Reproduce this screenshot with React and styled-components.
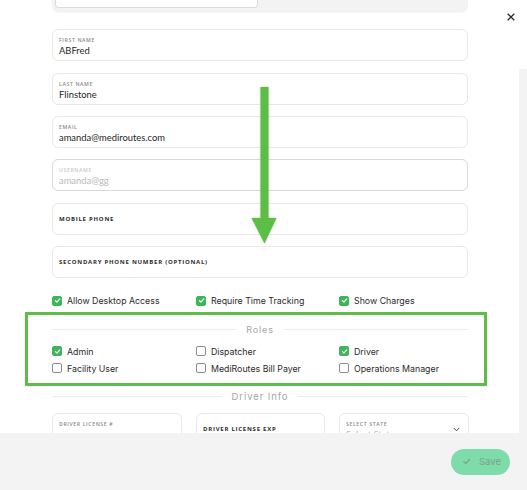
import React from 'react';
import styled, { createGlobalStyle } from 'styled-components';

const GlobalStyle = createGlobalStyle`
  html, body {
    margin: 0;
    padding: 0;
    background: #ffffff;
  }
  * {
    box-sizing: border-box;
  }
`;

const Page = styled.div`
  width: 527px;
  height: 490px;
  display: flex;
  flex-direction: column;
  background: #fff;
  font-family: "Open Sans", "Noto Sans", sans-serif;
  overflow: hidden;
`;

const ScrollArea = styled.div`
  position: relative;
  height: 433px;
  flex-shrink: 0;
  display: flex;
  padding-left: 52px;
  overflow: hidden;
`;

const FormColumn = styled.div`
  width: 416px;
  flex-shrink: 0;
  display: flex;
  flex-direction: column;
`;

const RightColumn = styled.div`
  flex: 1;
  display: flex;
  justify-content: flex-end;
`;

const CloseButton = styled.div`
  width: 8px;
  height: 8px;
  margin-top: 13px;
  margin-right: 4px;
  display: flex;
  color: #2a2a2a;
`;

const ScrollTrack = styled.div`
  width: 8px;
  padding-top: 69px;
  display: flex;
  flex-direction: column;
`;

const ScrollThumb = styled.div`
  flex: 1;
  background: #f3f3f3;
`;

const TopPanel = styled.div`
  height: 12px;
  flex-shrink: 0;
  background: #f3f3f3;
  border-radius: 0 0 6px 6px;
  padding-left: 3px;
  box-shadow: 0 1px 1px rgba(0, 0, 0, 0.03);
`;

const TopInput = styled.div`
  width: 203px;
  height: 8px;
  background: #fff;
  border: 1px solid #dcdcdc;
  border-top: none;
  border-radius: 0 0 4px 4px;
`;

const FieldList = styled.div`
  margin-top: 17.3px;
  display: flex;
  flex-direction: column;
  gap: 11.33px;
`;

const Field = styled.div`
  height: 32px;
  flex-shrink: 0;
  border: 1px solid ${p => (p.$disabled ? '#d9d9d9' : '#e8e8e8')};
  border-radius: 6px;
  padding: 0 6px;
  display: flex;
  flex-direction: column;
  justify-content: ${p => (p.$center ? 'center' : 'flex-start')};
  padding-top: ${p => (p.$center ? '0' : '7px')};
  background: #fff;
`;

const SmallLabel = styled.div`
  font-size: 5.2px;
  font-weight: 600;
  letter-spacing: 0.6px;
  text-transform: uppercase;
  color: ${p => (p.$disabled ? '#c8c8c8' : '#8a8a8a')};
  line-height: 7px;
`;

const Value = styled.div`
  font-family: Lato, "Open Sans", sans-serif;
  font-size: 9.4px;
  color: ${p => (p.$disabled ? '#b9b9b9' : '#1f1f1f')};
  line-height: 12px;
  margin-top: 1px;
`;

const BoldLabel = styled.div`
  font-size: 6px;
  font-weight: 700;
  letter-spacing: 0.75px;
  text-transform: uppercase;
  color: #2c2c2c;
  line-height: 8px;
`;

const OptionsRow = styled.div`
  margin-top: 17px;
  display: grid;
  grid-template-columns: 144px 143px 1fr;
`;

const CheckItem = styled.label`
  display: flex;
  align-items: center;
  gap: 5px;
  height: 12px;
  font-family: Inter, "Liberation Sans", sans-serif;
  font-size: 8.8px;
  color: #2b2b2b;
`;

const Box = styled.span`
  width: 10px;
  height: 10px;
  border-radius: 2px;
  display: flex;
  align-items: center;
  justify-content: center;
  background: ${p => (p.$checked ? '#3fb45a' : '#fff')};
  border: 1px solid ${p => (p.$checked ? '#3fb45a' : '#8c8c8c')};
  flex-shrink: 0;
`;

const RolesBox = styled.div`
  margin: 5.3px -19px 0 -27px;
  border: 3px solid #5cbd48;
  padding: 8px 16px 9px 24px;
`;

const Divider = styled.div`
  display: flex;
  align-items: center;
  gap: 10px;
  height: 12px;
  flex-shrink: 0;
  margin-top: ${p => p.$mt || '0'};
  font-family: Inter, "Liberation Sans", sans-serif;
  font-size: ${p => p.$size || '9px'};
  letter-spacing: 0.9px;
  color: #a6a6a6;

  &::before,
  &::after {
    content: '';
    flex: 1;
    height: 1px;
    background: #ececec;
  }
`;

const RolesGrid = styled.div`
  margin-top: 10px;
  display: grid;
  grid-template-columns: 144px 143px 1fr;
  row-gap: 5px;
`;

const DriverGrid = styled.div`
  margin-top: 11px;
  display: grid;
  grid-template-columns: 130px 129px 130px;
  column-gap: 14px;
  justify-content: space-between;
`;

const DriverField = styled(Field)`
  position: relative;
`;

const Chevron = styled.div`
  position: absolute;
  right: 8px;
  top: 13px;
  display: flex;
  color: #444;
`;

const ArrowOverlay = styled.svg`
  position: absolute;
  left: 251px;
  top: 87px;
  filter: drop-shadow(0 0 1px rgba(60, 150, 40, 0.4));
`;

const Footer = styled.div`
  height: 57px;
  flex-shrink: 0;
  background: #f3f3f3;
  display: flex;
  align-items: center;
  justify-content: flex-end;
  padding-right: 17px;
`;

const SaveButton = styled.button`
  width: 59px;
  height: 26px;
  border: none;
  border-radius: 13px;
  background: #7edcab;
  color: #7d9f8b;
  font-family: Inter, "Liberation Sans", sans-serif;
  font-size: 9.5px;
  display: flex;
  align-items: center;
  justify-content: center;
  gap: 8px;
  padding: 0 0 0 2px;
`;

const Check = ({ color = '#fff', size = 7 }) => (
  <svg width={size} height={size} viewBox="0 0 10 10" fill="none">
    <path d="M2 5.2 L4.2 7.3 L8.2 2.8" stroke={color} strokeWidth="1.6" strokeLinecap="round" strokeLinejoin="round" />
  </svg>
);

const CheckBox = ({ checked, children }) => (
  <CheckItem>
    <Box $checked={checked}>{checked && <Check />}</Box>
    {children}
  </CheckItem>
);

const fields = [
  { label: 'First Name', value: 'ABFred' },
  { label: 'Last Name', value: 'Flinstone' },
  { label: 'Email', value: 'amanda@mediroutes.com' },
  { label: 'Username', value: 'amanda@gg', disabled: true },
];

const roles = [
  { name: 'Admin', checked: true },
  { name: 'Dispatcher', checked: false },
  { name: 'Driver', checked: true },
  { name: 'Facility User', checked: false },
  { name: 'MediRoutes Bill Payer', checked: false },
  { name: 'Operations Manager', checked: false },
];

export default function App() {
  return (
    <Page>
      <GlobalStyle />
      <ScrollArea>
        <FormColumn>
          <TopPanel>
            <TopInput />
          </TopPanel>

          <FieldList>
            {fields.map(f => (
              <Field key={f.label} $disabled={f.disabled}>
                <SmallLabel $disabled={f.disabled}>{f.label}</SmallLabel>
                <Value $disabled={f.disabled}>{f.value}</Value>
              </Field>
            ))}
            <Field $center>
              <BoldLabel>Mobile Phone</BoldLabel>
            </Field>
            <Field $center>
              <BoldLabel>Secondary Phone Number (Optional)</BoldLabel>
            </Field>
          </FieldList>

          <OptionsRow>
            <CheckBox checked>Allow Desktop Access</CheckBox>
            <CheckBox checked>Require Time Tracking</CheckBox>
            <CheckBox checked>Show Charges</CheckBox>
          </OptionsRow>

          <RolesBox>
            <Divider>Roles</Divider>
            <RolesGrid>
              {roles.map(r => (
                <CheckBox key={r.name} checked={r.checked}>{r.name}</CheckBox>
              ))}
            </RolesGrid>
          </RolesBox>

          <Divider $mt="4px" $size="9.5px">Driver Info</Divider>

          <DriverGrid>
            <DriverField>
              <SmallLabel>Driver License #</SmallLabel>
            </DriverField>
            <DriverField $center>
              <BoldLabel>Driver License Exp</BoldLabel>
            </DriverField>
            <DriverField>
              <SmallLabel>Select State</SmallLabel>
              <Value $disabled>Select State</Value>
              <Chevron>
                <svg width="7" height="5" viewBox="0 0 7 5" fill="none">
                  <path d="M0.8 1 L3.5 3.8 L6.2 1" stroke="currentColor" strokeWidth="1" />
                </svg>
              </Chevron>
            </DriverField>
          </DriverGrid>
        </FormColumn>

        <RightColumn>
          <CloseButton>
            <svg width="8" height="8" viewBox="0 0 8 8">
              <path d="M0.7 0.7 L7.3 7.3 M7.3 0.7 L0.7 7.3" stroke="currentColor" strokeWidth="1.3" />
            </svg>
          </CloseButton>
          <ScrollTrack>
            <ScrollThumb />
          </ScrollTrack>
        </RightColumn>

        <ArrowOverlay width="26" height="157" viewBox="0 0 26 157">
          <rect x="9.5" y="0" width="8" height="133" fill="#5cbd47" />
          <polygon points="0.5,131 25.5,131 13.5,156.5" fill="#5cbd47" />
        </ArrowOverlay>
      </ScrollArea>

      <Footer>
        <SaveButton>
          <Check color="#7fa58f" size={9} />
          Save
        </SaveButton>
      </Footer>
    </Page>
  );
}
